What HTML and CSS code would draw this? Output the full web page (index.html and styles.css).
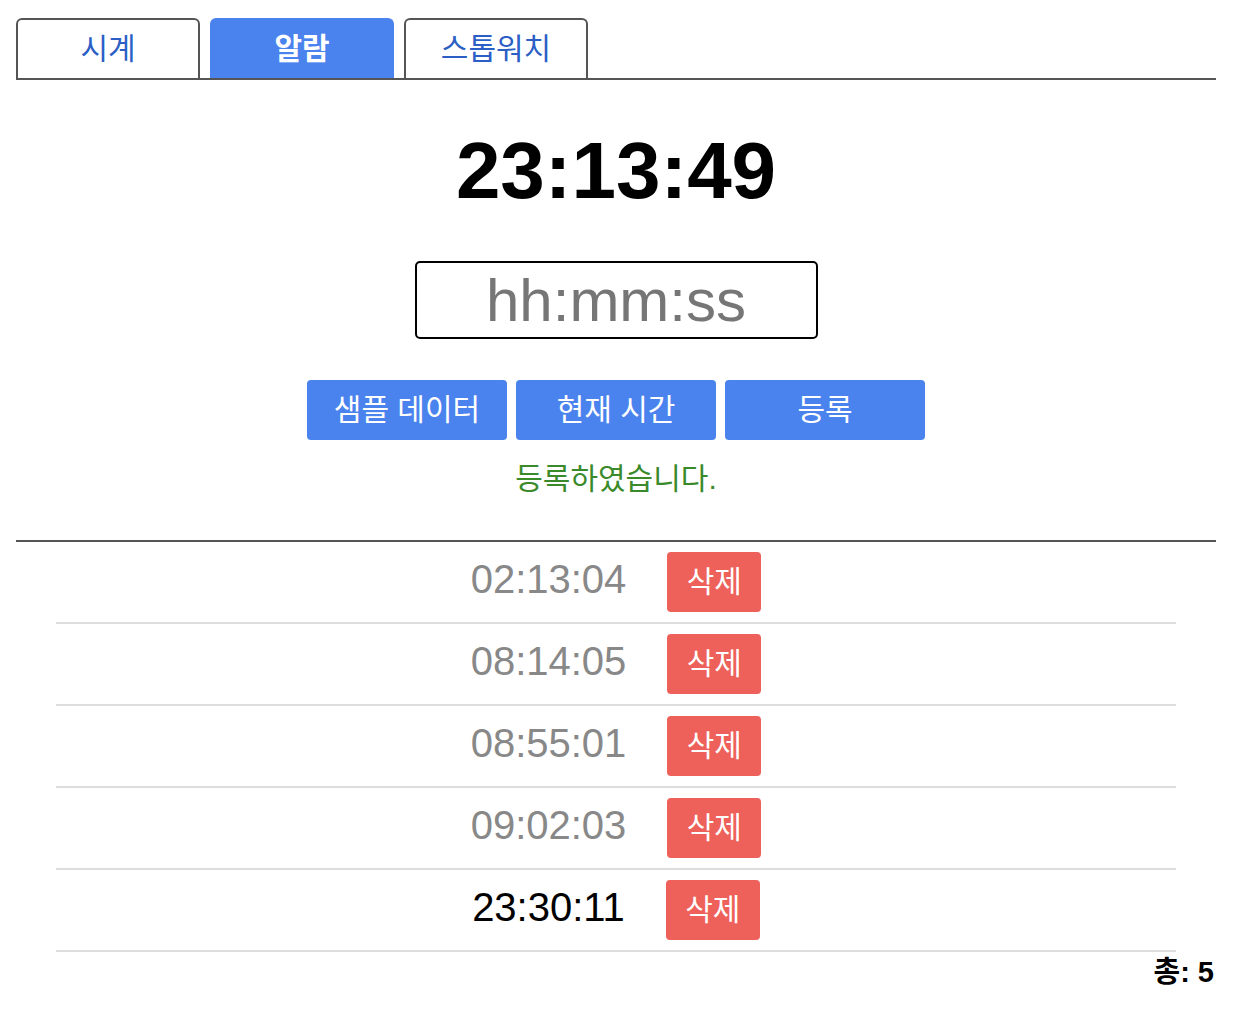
FILE: index.html
```html
<!DOCTYPE html>
<html lang="ko">
<head>
<meta charset="utf-8">
<title>알람</title>
<link rel="stylesheet" href="styles.css">
</head>
<body>
<div class="app">
  <nav class="tabs">
    <button class="tab">시계</button>
    <button class="tab active">알람</button>
    <button class="tab">스톱워치</button>
  </nav>
  <div class="clock">23:13:49</div>
  <div class="form">
    <input class="time-input" type="text" placeholder="hh:mm:ss">
  </div>
  <div class="actions">
    <button class="btn">샘플 데이터</button>
    <button class="btn">현재 시간</button>
    <button class="btn">등록</button>
  </div>
  <p class="msg">등록하였습니다.</p>
  <hr class="divider">
  <ul class="alarms">
    <li class="alarm"><span class="alarm-time past">02:13:04</span><button class="del">삭제</button></li>
    <li class="alarm"><span class="alarm-time past">08:14:05</span><button class="del">삭제</button></li>
    <li class="alarm"><span class="alarm-time past">08:55:01</span><button class="del">삭제</button></li>
    <li class="alarm"><span class="alarm-time past">09:02:03</span><button class="del">삭제</button></li>
    <li class="alarm"><span class="alarm-time">23:30:11</span><button class="del">삭제</button></li>
  </ul>
  <div class="total">총: 5</div>
</div>
</body>
</html>
```
FILE: styles.css
```css
* { box-sizing: border-box; }

body {
  margin: 0;
  background: #fff;
  font-family: "Liberation Sans", Arial, "Noto Sans CJK KR", sans-serif;
  color: #000;
}

.app {
  width: 1200px;
  margin-left: 16px;
  padding-top: 18px;
}

.tabs {
  display: flex;
  gap: 10px;
  border-bottom: 2px solid #555;
}

.tab {
  width: 184px;
  height: 60px;
  border: 2px solid #555;
  border-bottom: none;
  border-radius: 6px 6px 0 0;
  background: #fff;
  color: #2b5fc6;
  font-family: inherit;
  font-size: 30px;
  line-height: 1;
  padding: 0;
  display: flex;
  align-items: center;
  justify-content: center;
}

.tab.active {
  background: #4a83ee;
  border-color: #4a83ee;
  color: #fff;
  font-weight: bold;
}

.clock {
  margin-top: 51px;
  text-align: center;
  font-size: 80px;
  line-height: 80px;
  font-weight: bold;
}

.form {
  margin-top: 50px;
  display: flex;
  justify-content: center;
}

.time-input {
  width: 403px;
  height: 78px;
  border: 2px solid #000;
  border-radius: 5px;
  font-family: inherit;
  font-size: 60px;
  text-align: center;
  padding: 0;
  outline: none;
}

.time-input::placeholder {
  color: #767676;
}

.actions {
  margin-top: 41px;
  display: flex;
  justify-content: center;
  gap: 9px;
}

.btn {
  width: 200px;
  height: 60px;
  border: none;
  border-radius: 4px;
  background: #4a83ee;
  color: #fff;
  font-family: inherit;
  font-size: 30px;
  line-height: 1;
  padding: 0;
}

.msg {
  margin: 18px 0 0;
  padding-top: 1px;
  text-align: center;
  color: #3a8a2c;
  font-size: 30px;
  line-height: 40px;
}

.divider {
  margin: 41px 0 0;
  border: none;
  border-top: 2px solid #555;
  height: 0;
}

.alarms {
  list-style: none;
  margin: 0;
  padding: 0 40px;
}

.alarm {
  height: 82px;
  border-bottom: 2px solid #ddd;
  display: flex;
  align-items: center;
  justify-content: center;
}

.alarm-time {
  font-size: 40px;
  line-height: 1;
  padding-bottom: 6px;
  margin-right: 41px;
  color: #000;
}

.alarm-time.past {
  color: #888;
}

.del {
  width: 94px;
  height: 60px;
  border: none;
  border-radius: 4px;
  background: #ed615a;
  color: #fff;
  font-family: inherit;
  font-size: 30px;
  line-height: 1;
  padding: 0;
}

.total {
  text-align: right;
  font-size: 29px;
  line-height: 40px;
  font-weight: bold;
  padding-right: 2px;
}
```
